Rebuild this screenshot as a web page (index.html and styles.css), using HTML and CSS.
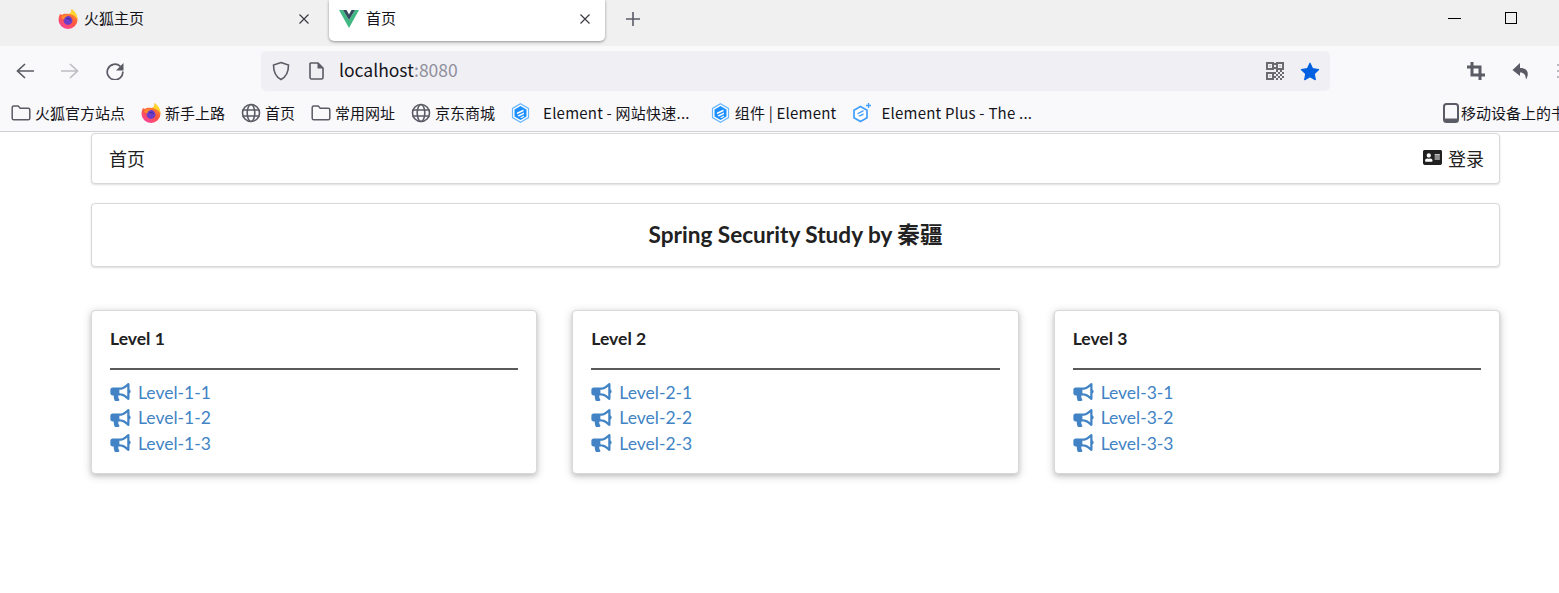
FILE: index.html
```html
<!DOCTYPE html>
<html lang="zh-CN">
<head>
    <meta charset="UTF-8">
    <meta name="viewport" content="width=device-width, initial-scale=1.0">
    <title>首页</title>
    <link rel="stylesheet" href="styles.css">
</head>
<body>
    <svg class="icon-defs" width="0" height="0">
        <defs>
            <linearGradient id="foxGrad" x1="0.8" y1="0" x2="0.3" y2="1">
                <stop offset="0" stop-color="#ff9a2e"/>
                <stop offset="0.55" stop-color="#ff5a3c"/>
                <stop offset="1" stop-color="#f8409f"/>
            </linearGradient>
            <symbol id="fox" viewBox="0 0 20 20">
                <path d="M2 5 C1 7 .5 9 .5 11 a9.500 9 0 0 0 19 0 C19.500 7 17.500 3 13.500 0 C14 2.500 13 4 11 5 C8 4.500 5 4.500 4 6z" fill="url(#foxGrad)"/>
                <path d="M11 5 C13 4 14 2.500 13.500 0 C17 2.500 19.500 6 19.500 11 C18.500 8 15 5.500 11 5Z" fill="#ffd52e"/>
                <circle cx="10" cy="11.500" r="4.400" fill="#6f3cc9"/>
                <path d="M3 8 C5 5.500 8 5.500 10.500 6.800 C8 7 6.500 8.500 6.200 10.500 C5 10 3.500 9.500 3 8Z" fill="#ff8a2e"/>
                <path d="M8 9.500 C10 8.500 12.500 9.500 13 11.500 C11.500 10.500 9.500 10 8 9.500Z" fill="#3c2a9c"/>
            </symbol>
            <symbol id="globe" viewBox="0 0 20 20">
                <g fill="none" stroke="#5b5b66" stroke-width="1.600">
                    <circle cx="10" cy="10" r="8.500"/>
                    <ellipse cx="10" cy="10" rx="3.800" ry="8.500"/>
                    <path d="M1.500 7h17M1.500 13h17"/>
                </g>
            </symbol>
            <symbol id="folder" viewBox="0 0 20 20">
                <path d="M2.800 3h4.400l2 2.200h8c.9 0 1.600.7 1.600 1.600v8.400c0 .9-.7 1.600-1.600 1.600H2.800c-.9 0-1.600-.7-1.600-1.600V4.600c0-.9.7-1.600 1.600-1.600z" fill="none" stroke="#5b5b66" stroke-width="1.500"/>
            </symbol>
            <symbol id="element" viewBox="0 0 20 20">
                <path d="M9.500 .800l8 4.600v9.200l-8 4.600-8-4.600V5.400z" fill="#fff" stroke="#6ab7ff" stroke-width="1.200"/>
                <path d="M9.500 3l6 3.500v7l-6 3.500-6-3.500v-7z" fill="#1e8fff"/>
                <path d="M6 9.500l6.500-3v1.800L6 11.300zM6.500 12.500l6.500-3v1.600l-5 2.300zM9 14.500l4-1.900v1.200l-2.500 1.300z" fill="#fff"/>
            </symbol>
            <symbol id="elementPlus" viewBox="0 0 20 20">
                <path d="M8.500 3.500l6.500 3.700v7.600l-6.500 3.700L2 14.800V7.200z" fill="#fff" stroke="#409eff" stroke-width="1.700"/>
                <path d="M5.500 10l6-3v1.600l-6 3zM6 13l5.500-2.700v1.600L8 13.600z" fill="#409eff"/>
                <path d="M16.500 0v5M14 2.500h5" stroke="#409eff" stroke-width="1.300"/>
            </symbol>
            <symbol id="bullhorn" viewBox="0 0 576 512">
                <path fill="currentColor" d="M576 240c0-23.63-12.95-44.04-32-55.12V32.01C544 23.26 537.02 0 512 0c-7.12 0-14.19 2.38-19.98 7.02l-85.03 68.03C364.28 109.19 310.66 128 256 128H64c-35.35 0-64 28.65-64 64v96c0 35.35 28.65 64 64 64h33.7c-1.39 10.48-2.18 21.14-2.18 32 0 39.77 9.26 77.35 25.56 110.94 5.19 10.69 16.52 17.06 28.4 17.06h74.28c26.05 0 41.69-29.84 25.9-50.56-16.4-21.52-26.15-48.36-26.15-77.44 0-11.11 1.62-21.79 4.41-32H256c54.66 0 108.28 18.81 150.98 52.95l85.03 68.03a32.023 32.023 0 0 0 19.98 7.02c24.92 0 32-22.78 32-32V295.13C563.05 284.04 576 263.63 576 240zm-96 141.42l-33.05-26.44C392.95 311.78 325.12 288 256 288v-96c69.12 0 136.95-23.78 190.95-66.98L480 98.58v282.84z"/>
            </symbol>
        </defs>
    </svg>

    <!-- Tab strip -->
    <div class="tab-strip">
        <div class="tab">
            <svg class="tab-icon" width="20" height="20"><use href="#fox"/></svg>
            <span class="tab-title">火狐主页</span>
            <svg class="tab-close" width="12" height="12" viewBox="0 0 12 12"><path d="M1.500 1.500l9 9M10.500 1.500l-9 9"/></svg>
        </div>
        <div class="tab tab-active">
            <svg class="tab-icon" width="20" height="20" viewBox="0 0 20 18">
                <path d="M0 0h4l6 10L16 0h4L10 18z" fill="#41b883"/>
                <path d="M4 0h3.500L10 4.500 12.500 0H16l-6 10z" fill="#35495e"/>
            </svg>
            <span class="tab-title">首页</span>
            <svg class="tab-close" width="12" height="12" viewBox="0 0 12 12"><path d="M1.500 1.500l9 9M10.500 1.500l-9 9"/></svg>
        </div>
        <svg class="new-tab" width="16" height="16" viewBox="0 0 16 16"><path d="M8 1v14M1 8h14"/></svg>
        <div class="window-controls">
            <span class="win-min"></span>
            <span class="win-max"></span>
        </div>
    </div>

    <!-- Toolbar -->
    <div class="toolbar">
        <div class="nav-buttons">
            <svg width="18" height="18" viewBox="0 0 18 18" class="nav-icon"><path d="M18 9H1.500M9 2L1.500 9 9 16"/></svg>
            <svg width="18" height="18" viewBox="0 0 18 18" class="nav-icon nav-off"><path d="M0 9h16.500M9 2l7.500 7L9 16"/></svg>
            <svg width="18" height="18" viewBox="0 0 18 18" class="nav-icon"><path d="M14.300 4.300A7.800 7.800 0 1 0 16.800 9.500"/><path d="M17.500 1v7.500H10z" fill="#5b5b66" stroke="none"/></svg>
        </div>
        <div class="url-bar">
            <svg width="18" height="20" viewBox="0 0 18 20" class="url-icon"><path d="M9 1.500l7.500 2.500c0 7-1.500 11.500-7.500 14.500C3 15.500 1.500 11 1.500 4z"/></svg>
            <svg width="16" height="18" viewBox="0 0 16 18" class="url-icon"><path d="M3 1h7l5 5v9.500c0 .8-.7 1.500-1.500 1.500h-10c-.8 0-1.500-.7-1.500-1.500v-13C1.500 1.700 2.200 1 3 1z"/><path d="M9.500 1v5.500H15z" fill="#5b5b66" stroke="none"/></svg>
            <span class="url-text">localhost<span class="url-port">:8080</span></span>
            <svg width="18" height="18" viewBox="0 0 18 18" class="qr-icon">
                <path d="M0 0h8v8H0zM2 2v4h4V2zM10 0h8v8h-8zM12 2v4h4V2zM0 10h8v8H0zM2 12v4h4v-4z" fill-rule="evenodd"/>
                <path d="M3.500 3.500h1v1h-1zM13.500 3.500h1v1h-1zM3.500 13.500h1v1h-1zM8 1h2v2H8zM8 5h2v2H8zM10 8h2v2h-2zM14 8h2v2h-2zM8 10h2v2H8zM12 10h2v2h-2zM16 10h2v2h-2zM10 12h2v2h-2zM14 12h2v2h-2zM8 14h2v2H8zM12 14h2v2h-2zM16 14h2v2h-2zM10 16h2v2h-2zM14 16h2v2h-2z"/>
            </svg>
            <svg width="20" height="19" viewBox="0 0 20 19" class="star-icon"><path d="M10 1.200l2.600 5.500 6 .8-4.400 4.200 1.100 6L10 14.800l-5.300 2.900 1.100-6L1.400 7.500l6-.8z"/></svg>
        </div>
        <div class="toolbar-right">
            <svg width="18" height="18" viewBox="0 0 18 18" class="tool-icon crop-icon"><path d="M5 0v13h13M0 5h13v13"/></svg>
            <svg width="18" height="17" viewBox="0 0 18 17" class="tool-icon"><path d="M8 0L.500 7 8 13V9.500c4 0 5.500 2 6 7 3-4.500 3-11.500-6-11.500z"/></svg>
            <svg width="18" height="14" viewBox="0 0 18 14" class="tool-icon tool-menu"><path d="M0 0h18v2H0zM0 6h18v2H0zM0 12h18v2H0z"/></svg>
        </div>
    </div>

    <!-- Bookmarks -->
    <div class="bookmarks">
        <div class="bookmark"><svg width="20" height="20"><use href="#folder"/></svg>火狐官方站点</div>
        <div class="bookmark"><svg width="20" height="20"><use href="#fox"/></svg>新手上路</div>
        <div class="bookmark"><svg width="20" height="20"><use href="#globe"/></svg>首页</div>
        <div class="bookmark"><svg width="20" height="20"><use href="#folder"/></svg>常用网址</div>
        <div class="bookmark"><svg width="20" height="20"><use href="#globe"/></svg>京东商城</div>
        <div class="bookmark bookmark-latin bookmark-wide"><svg width="20" height="20"><use href="#element"/></svg>Element - 网站快速...</div>
        <div class="bookmark bookmark-latin"><svg width="20" height="20"><use href="#element"/></svg>组件 | Element</div>
        <div class="bookmark bookmark-latin bookmark-plus"><svg width="20" height="20"><use href="#elementPlus"/></svg>Element Plus - The ...</div>
        <div class="bookmark mobile-bookmark">
            <svg width="16" height="20" viewBox="0 0 16 20"><rect x="1" y="1" width="14" height="18" rx="2.500" fill="none" stroke="#5b5b66" stroke-width="2"/><path d="M1 15.500h14V18H1z" fill="#5b5b66"/></svg>移动设备上的书签
        </div>
    </div>

    <!-- Page -->
    <div class="page">
        <div class="card nav-card">
            <span class="nav-home">首页</span>
            <span class="nav-login">
                <svg width="19" height="17" viewBox="0 0 576 512"><path fill="currentColor" d="M528 32H48C21.5 32 0 53.5 0 80v352c0 26.500 21.500 48 48 48h480c26.500 0 48-21.500 48-48V80c0-26.500-21.500-48-48-48zm-352 96c35.300 0 64 28.700 64 64s-28.700 64-64 64-64-28.700-64-64 28.700-64 64-64zm112 236.800c0 10.600-10 19.200-22.400 19.200H86.400C74 384 64 375.400 64 364.800v-19.200c0-31.800 30.100-57.600 67.200-57.600h5c12.300 5.100 25.700 8 39.800 8s27.600-2.900 39.800-8h5c37.100 0 67.200 25.800 67.200 57.600v19.200zM512 312c0 4.400-3.600 8-8 8H360c-4.400 0-8-3.600-8-8v-16c0-4.400 3.600-8 8-8h144c4.400 0 8 3.600 8 8v16zm0-64c0 4.400-3.600 8-8 8H360c-4.400 0-8-3.600-8-8v-16c0-4.400 3.600-8 8-8h144c4.400 0 8 3.600 8 8v16zm0-64c0 4.400-3.600 8-8 8H360c-4.400 0-8-3.600-8-8v-16c0-4.400 3.600-8 8-8h144c4.400 0 8 3.600 8 8v16z"/></svg>
                登录
            </span>
        </div>

        <div class="card title-card">
            <h1>Spring Security Study by 秦疆</h1>
        </div>

        <div class="level-grid">
            <div class="card level-card">
                <h3>Level 1</h3>
                <div class="level-links">
                    <a class="level-link"><svg width="21" height="18"><use href="#bullhorn"/></svg>Level-1-1</a>
                    <a class="level-link"><svg width="21" height="18"><use href="#bullhorn"/></svg>Level-1-2</a>
                    <a class="level-link"><svg width="21" height="18"><use href="#bullhorn"/></svg>Level-1-3</a>
                </div>
            </div>
            <div class="card level-card">
                <h3>Level 2</h3>
                <div class="level-links">
                    <a class="level-link"><svg width="21" height="18"><use href="#bullhorn"/></svg>Level-2-1</a>
                    <a class="level-link"><svg width="21" height="18"><use href="#bullhorn"/></svg>Level-2-2</a>
                    <a class="level-link"><svg width="21" height="18"><use href="#bullhorn"/></svg>Level-2-3</a>
                </div>
            </div>
            <div class="card level-card">
                <h3>Level 3</h3>
                <div class="level-links">
                    <a class="level-link"><svg width="21" height="18"><use href="#bullhorn"/></svg>Level-3-1</a>
                    <a class="level-link"><svg width="21" height="18"><use href="#bullhorn"/></svg>Level-3-2</a>
                    <a class="level-link"><svg width="21" height="18"><use href="#bullhorn"/></svg>Level-3-3</a>
                </div>
            </div>
        </div>
    </div>
</body>
</html>
```

FILE: styles.css
```css
* {
    margin: 0;
    padding: 0;
    box-sizing: border-box;
}
html, body {
    height: 593px;
    overflow: hidden;
}
body {
    font-family: "Noto Sans CJK SC", "Noto Sans", sans-serif;
    background-color: #fff;
    color: #15141a;
}
svg {
    display: block;
    flex-shrink: 0;
}
.icon-defs {
    position: absolute;
}

/* tab strip */
.tab-strip {
    display: flex;
    align-items: flex-start;
    height: 46px;
    padding-left: 48px;
    background-color: #f0f0f1;
}
.tab {
    display: flex;
    align-items: center;
    width: 276px;
    height: 41px;
    margin-right: 5px;
    padding: 0 14px 3px 10px;
    font-size: 15px;
}
.tab-active {
    background-color: #fff;
    border-radius: 0 0 5px 5px;
    box-shadow: 0 1px 3px rgba(0,0,0,0.4);
}
.tab-icon {
    margin-right: 6px;
}
.tab-active .tab-icon {
    margin-right: 7px;
}
.tab-title {
    flex: 1;
    padding-bottom: 3px;
}
.tab-close {
    fill: none;
    stroke: #3b3b42;
    stroke-width: 1.2;
}
.new-tab {
    margin: 11px 0 0 15px;
    fill: none;
    stroke: #5b5b66;
    stroke-width: 1.6;
}
.window-controls {
    display: flex;
    align-items: flex-start;
    margin-left: auto;
    padding: 12px 42px 0 0;
}
.win-min {
    width: 13px;
    height: 1px;
    margin: 6px 44px 0 0;
    background-color: #000;
}
.win-max {
    width: 12px;
    height: 12px;
    border: 1px solid #000;
}

/* toolbar */
.toolbar {
    display: flex;
    align-items: center;
    height: 46px;
    background-color: #f9f9fb;
    overflow: hidden;
}
.nav-buttons {
    display: flex;
    flex-shrink: 0;
    gap: 27px;
    width: 261px;
    margin-top: 4px;
    padding-left: 16px;
}
.nav-icon {
    fill: none;
    stroke: #5b5b66;
    stroke-width: 1.7;
}
.nav-off {
    stroke: #bdbdc2;
}
.url-bar {
    display: flex;
    flex-shrink: 0;
    align-items: center;
    width: 1069px;
    height: 40px;
    margin-top: 4px;
    padding: 0 10px 0 11px;
    background-color: #f0f0f4;
    border-radius: 5px;
}
.url-icon {
    margin-right: 18px;
    fill: none;
    stroke: #5b5b66;
    stroke-width: 1.6;
}
.url-icon + .url-icon {
    margin-right: 15px;
}
.url-text {
    flex: 1;
    font-size: 17.5px;
    line-height: 38px;
    height: 40px;
}
.url-port {
    color: #8f8f9d;
}
.qr-icon {
    margin-right: 16px;
    fill: #6a6a70;
}
.star-icon {
    fill: #0060df;
    stroke: #0060df;
    stroke-width: 1.2;
    stroke-linejoin: round;
}
.toolbar-right {
    display: flex;
    flex-shrink: 0;
    align-items: center;
    gap: 27px;
    margin-top: 4px;
    padding-left: 137px;
}
.tool-icon {
    fill: #5b5b66;
}
.crop-icon {
    fill: none;
    stroke: #5b5b66;
    stroke-width: 3;
}
.tool-menu {
    opacity: 0.4;
}

/* bookmarks */
.bookmarks {
    display: flex;
    align-items: center;
    height: 40px;
    padding: 2px 0 0 11px;
    background-color: #f9f9fb;
    border-bottom: 1px solid #cfcfd8;
    font-size: 15px;
    white-space: nowrap;
    overflow: hidden;
}
.bookmark {
    display: flex;
    align-items: center;
    gap: 4px;
    margin-right: 16px;
}
.bookmark-latin {
    letter-spacing: 0.22px;
    margin-right: 15px;
}
.bookmark-wide {
    gap: 12px;
    margin-right: 21px;
}
.bookmark-plus {
    gap: 10px;
}
.mobile-bookmark {
    gap: 2px;
    margin-left: auto;
    margin-right: -22px;
}

/* page */
.page {
    width: 1409px;
    margin-left: 91px;
    padding-top: 1px;
    font-family: Lato, "Noto Sans CJK SC", sans-serif;
    color: #212121;
}
.card {
    background-color: #fff;
    border: 1px solid #d8d8d9;
    border-radius: 4px;
    box-shadow: 0 1px 2px rgba(34,36,38,0.15);
}
.nav-card {
    display: flex;
    justify-content: space-between;
    align-items: center;
    height: 51px;
    padding: 0 15px 2px 17px;
    font-size: 18px;
}
.nav-login {
    display: flex;
    align-items: center;
    gap: 6px;
}
.title-card {
    height: 64px;
    margin-top: 19px;
    padding-bottom: 4px;
    display: flex;
    align-items: center;
    justify-content: center;
}
.title-card h1 {
    font-size: 22.6px;
    font-weight: 700;
}
.level-grid {
    display: grid;
    grid-template-columns: repeat(3, 1fr);
    gap: 35px;
    margin-top: 43px;
}
.level-card {
    height: 164px;
    padding: 17px 18px 17px 18px;
    box-shadow: 0 2px 4px rgba(34,36,38,0.15), 0 2px 10px rgba(34,36,38,0.2);
}
.level-card h3 {
    height: 42px;
    font-size: 17.5px;
    line-height: 22px;
    font-weight: 700;
    border-bottom: 2px solid #5a5a5a;
}
.level-links {
    margin-top: 9.6px;
}
.level-link {
    display: flex;
    align-items: center;
    gap: 7px;
    height: 25.5px;
    font-size: 17.5px;
    color: #4183c4;
}
```
